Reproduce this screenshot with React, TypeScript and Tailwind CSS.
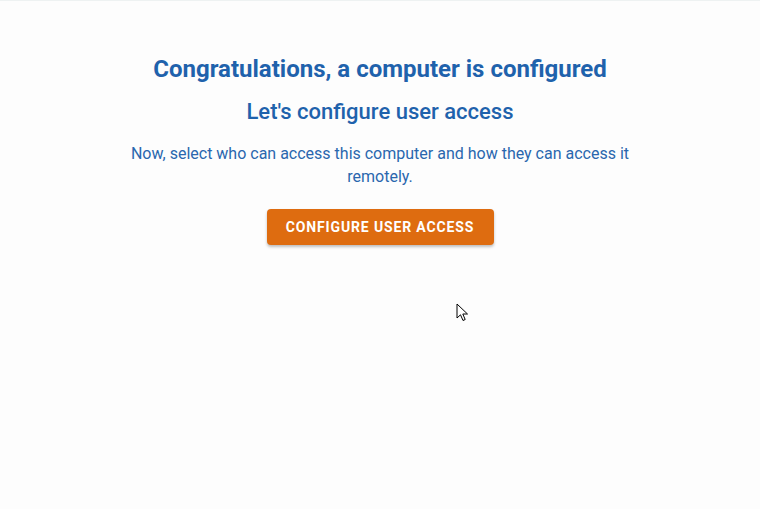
export default function App() {
  return (
    <div className="relative min-h-[509px] w-full bg-[#fdfdfd] border-t border-[#eef2f2] font-['Roboto',sans-serif]">
      <div className="flex flex-col items-center pt-[52px] text-center">
        <h1 className="text-[24px] font-bold leading-[32px] text-[#1f62ac]">
          Congratulations, a computer is configured
        </h1>
        <h2 className="mt-[12px] text-[22px] font-medium leading-[30px] text-[#1f62ac]">
          Let's configure user access
        </h2>
        <p className="mt-[15px] w-[510px] text-[16px] leading-[23px] text-[#2a67ae]">
          Now, select who can access this computer and how they can access it remotely.
        </p>
        <button className="mt-[21px] h-[36px] w-[227px] rounded-[4px] bg-[#de6c10] text-[14px] font-bold uppercase tracking-[0.85px] text-white shadow-[0_2px_3px_rgba(0,0,0,0.25)]">
          Configure user access
        </button>
      </div>
      <svg className="absolute left-[456px] top-[302px]" width="14" height="20" viewBox="0 0 14 20">
        <path d="M1 1 L1 15 L4.5 11.8 L7 17.5 L9.2 16.5 L6.8 11 L11.5 11 Z" fill="#fff" stroke="#000" strokeWidth="1" strokeLinejoin="miter" />
      </svg>
    </div>
  )
}
